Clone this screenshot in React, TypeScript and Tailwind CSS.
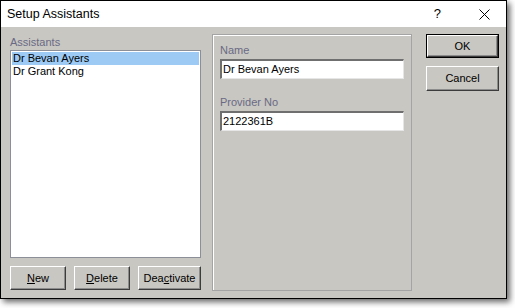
import React from 'react';

const font = { fontFamily: '"Liberation Sans", Arial, sans-serif' };

function Btn({ children, w, def }: { children: React.ReactNode; w: string; def?: boolean }) {
  const inner = (
    <div className="h-full w-full flex items-center justify-center border border-t-white border-l-white border-r-[#3c3c3c] border-b-[#3c3c3c] shadow-[inset_-1px_-1px_0_#8c8c8c] text-[11px] text-black leading-none">
      {children}
    </div>
  );
  return def ? (
    <div className={`${w} border border-black`}>{inner}</div>
  ) : (
    <div className={w}>{inner}</div>
  );
}

export default function App() {
  return (
    <div className="w-[515px] h-[308px] bg-white" style={font}>
      <div className="w-[507px] h-[299px] border border-black flex flex-col shadow-[3px_3px_6px_rgba(0,0,0,0.6)]">
        {/* title bar */}
        <div className="h-[26px] bg-white flex items-center pl-[6px] shrink-0">
          <span className="text-[12.5px] text-black flex-1">Setup Assistants</span>
          <span className="text-[13px] text-black mr-[38px]">?</span>
          <svg width="11" height="11" viewBox="0 0 11 11" className="mr-[16px]">
            <path d="M0.5 0.5 L10.5 10.5 M10.5 0.5 L0.5 10.5" stroke="#000" strokeWidth="1" />
          </svg>
        </div>

        {/* body */}
        <div className="flex-1 bg-[#c8c7c1] flex pl-[9px] pt-[7px]">
          {/* left column */}
          <div className="w-[191px] flex flex-col">
            <div className="text-[11px] leading-[16px] text-[#6a6a86]">Assistants</div>
            <div className="h-[208px] bg-white border border-[#8d8f98] p-[1px] text-[11px] text-black">
              <div className="h-[13px] leading-[13px] bg-[#9ccaf5] pl-[1px]">Dr Bevan Ayers</div>
              <div className="h-[13px] leading-[13px] pl-[1px]">Dr Grant Kong</div>
            </div>
            <div className="mt-[8px] h-[24px] flex gap-[8px]">
              <Btn w="w-[56px]"><span><span className="underline">N</span>ew</span></Btn>
              <Btn w="w-[56px]"><span><span className="underline">D</span>elete</span></Btn>
              <Btn w="w-[63px]"><span>Dea<span className="underline">c</span>tivate</span></Btn>
            </div>
          </div>

          {/* group box */}
          <div className="ml-[11px] w-[200px] h-[257px] border border-[#a4a4a4]">
            <div className="h-full border-t border-l border-white pl-[6px] pt-[6px] pr-[6px]">
              <div className="text-[11px] leading-[16px] text-[#6a6a86] mb-[1px]">Name</div>
              <div className="h-[20px] w-[184px] bg-white border-t-2 border-l-2 border-t-[#6f6f6f] border-l-[#6f6f6f] border-r border-b border-r-[#e6e6e6] border-b-[#e6e6e6] flex items-center pl-[1px] text-[11px] text-black">
                Dr Bevan Ayers
              </div>
              <div className="mt-[15px] text-[11px] leading-[16px] text-[#6a6a86] mb-[1px]">Provider No</div>
              <div className="h-[20px] w-[184px] bg-white border-t-2 border-l-2 border-t-[#6f6f6f] border-l-[#6f6f6f] border-r border-b border-r-[#e6e6e6] border-b-[#e6e6e6] flex items-center pl-[1px] text-[11px] text-black">
                2122361B
              </div>
            </div>
          </div>

          {/* dialog buttons */}
          <div className="ml-[14px] w-[73px] flex flex-col">
            <div className="h-[24px] flex">
              <Btn w="w-[73px]" def>OK</Btn>
            </div>
            <div className="mt-[8px] h-[25px] flex">
              <Btn w="w-[73px]">Cancel</Btn>
            </div>
          </div>
        </div>
      </div>
    </div>
  );
}
